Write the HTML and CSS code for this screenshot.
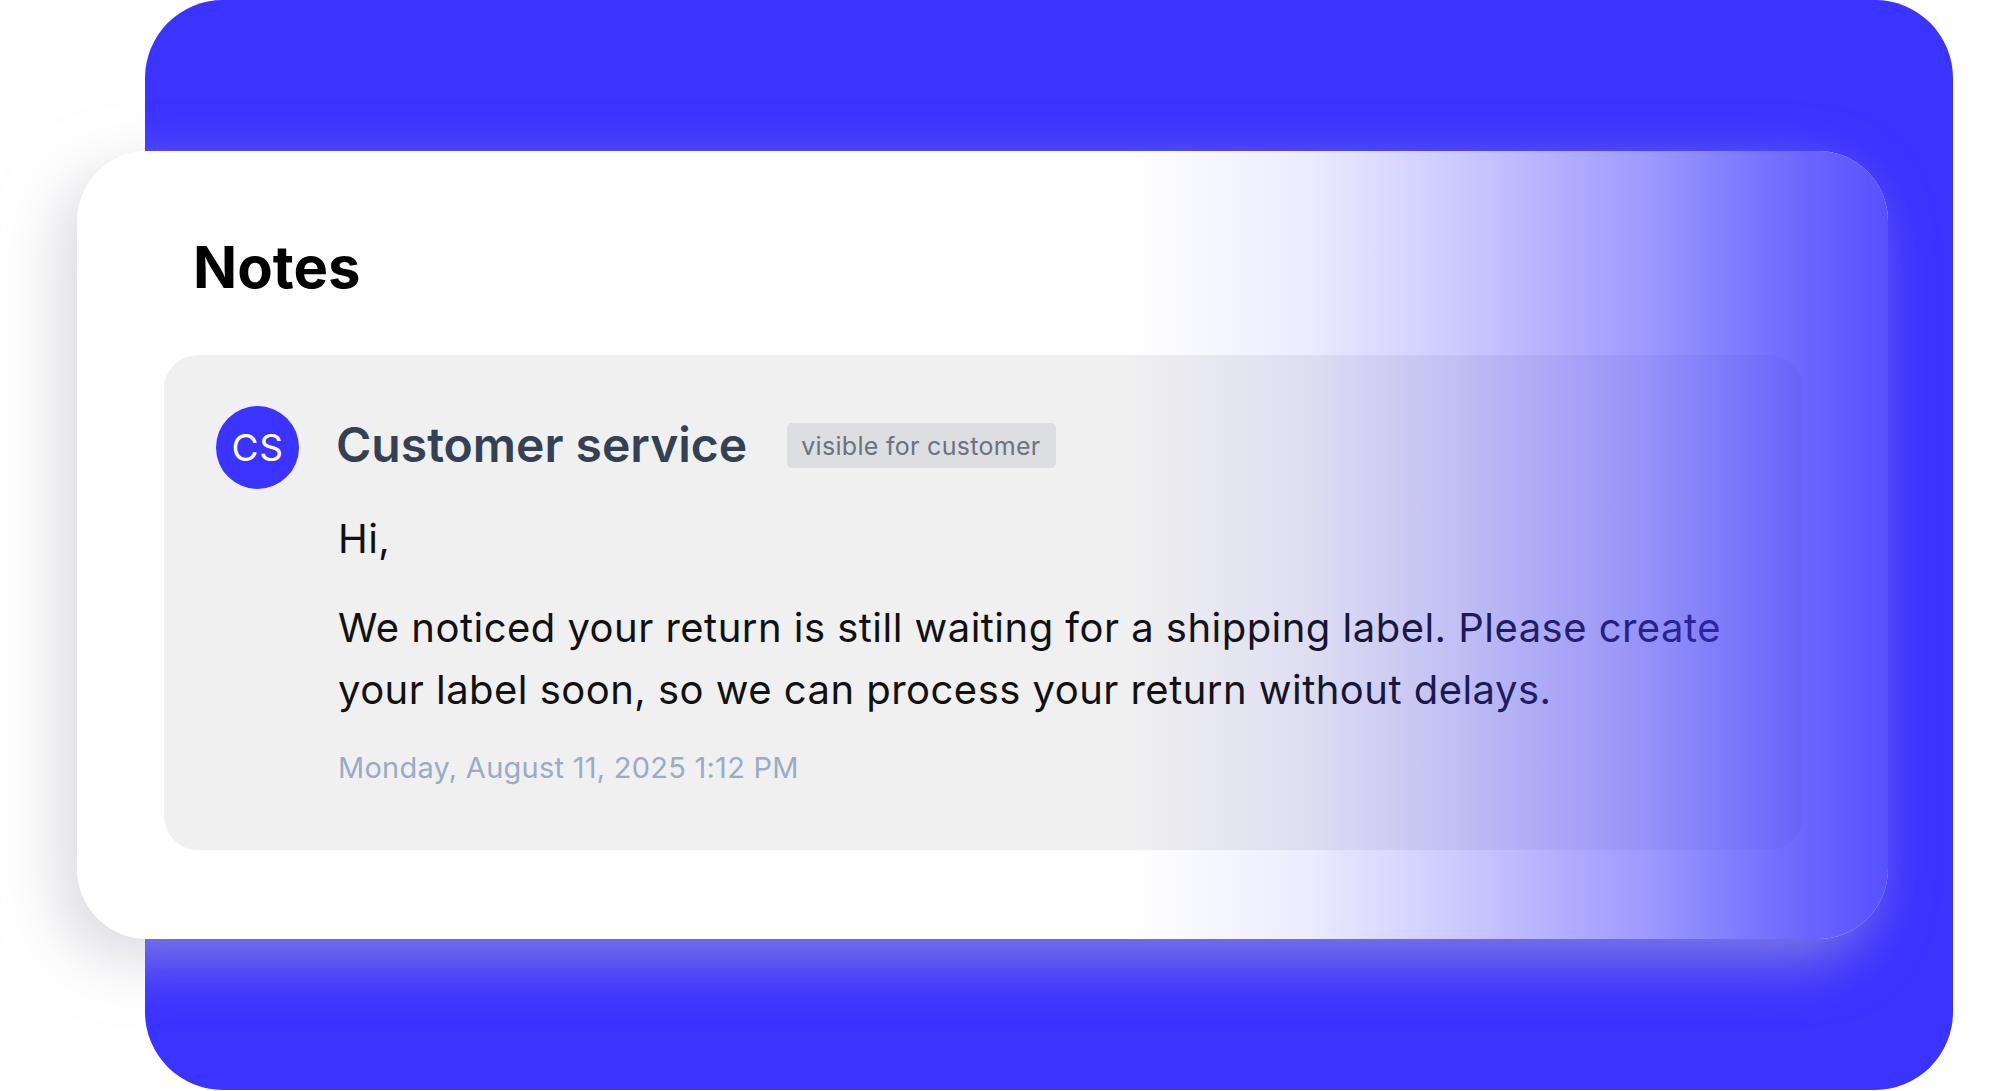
FILE: index.html
```html
<!DOCTYPE html>
<html lang="en">
<head>
<meta charset="utf-8">
<title>Notes</title>
<link rel="stylesheet" href="styles.css">
</head>
<body>
<div class="stage">
  <div class="backdrop"></div>
  <section class="card">
    <h1 class="card-title">Notes</h1>
    <article class="note">
      <div class="avatar">CS</div>
      <div class="note-body">
        <header class="note-head">
          <span class="author">Customer service</span>
          <span class="badge">visible for customer</span>
        </header>
        <p class="note-text">Hi,</p>
        <p class="note-text">We noticed your return is still waiting for a shipping label. Please create your label soon, so we can process your return without delays.</p>
        <time class="note-date">Monday, August 11, 2025 1:12 PM</time>
      </div>
    </article>
  </section>
</div>
</body>
</html>
```

FILE: styles.css
```css
html, body {
  margin: 0;
  padding: 0;
  background: #ffffff;
}

body {
  width: 2011px;
  height: 1091px;
  overflow: hidden;
  font-family: Inter, "Noto Sans", "Liberation Sans", sans-serif;
}

.stage {
  display: grid;
  width: 2011px;
  height: 1091px;
}

.backdrop {
  grid-area: 1 / 1;
  margin-left: 145px;
  width: 1808px;
  height: 1090px;
  border-radius: 78px;
  background: #3b33ff;
}

.card {
  grid-area: 1 / 1;
  align-self: start;
  justify-self: start;
  position: relative;
  box-sizing: border-box;
  margin: 151px 0 0 77px;
  width: 1811px;
  height: 788px;
  padding: 0 85px 0 87px;
  background: #ffffff;
  border-radius: 70px;
  box-shadow: -18px 20px 60px rgba(190, 190, 200, 0.55);
  display: flex;
  flex-direction: column;
}

.card::after {
  content: "";
  position: absolute;
  inset: 0;
  border-radius: inherit;
  pointer-events: none;
  background: linear-gradient(90deg,
    rgba(59, 51, 255, 0) 58%,
    rgba(59, 51, 255, 0.09) 67.5%,
    rgba(59, 51, 255, 0.25) 75.7%,
    rgba(59, 51, 255, 0.5) 86.8%,
    rgba(59, 51, 255, 0.74) 95%,
    rgba(59, 51, 255, 0.86) 100%);
}

.card-title {
  margin: 0;
  height: 204px;
  box-sizing: border-box;
  padding: 81px 0 0 29px;
  font-size: 58px;
  line-height: 70px;
  font-weight: 700;
  color: #000000;
}

.note {
  box-sizing: border-box;
  width: 1639px;
  height: 495px;
  padding: 51px 56px 0 52px;
  background: #f0f0f0;
  border-radius: 34px;
  display: flex;
  gap: 39px;
  align-items: flex-start;
}

.avatar {
  flex: none;
  width: 83px;
  height: 83px;
  border-radius: 50%;
  background: #3b33ff;
  color: #ffffff;
  font-size: 37px;
  font-weight: 400;
  display: flex;
  align-items: center;
  justify-content: center;
  letter-spacing: 0.5px;
}

.note-body {
  flex: 1;
  min-width: 0;
  display: flex;
  flex-direction: column;
}

.note-head {
  height: 83px;
  display: flex;
  align-items: center;
  gap: 40px;
  margin-bottom: 19px;
}

.author {
  font-size: 48px;
  font-weight: 600;
  color: #334155;
  line-height: 58px;
  padding-bottom: 5px;
  margin-left: -2px;
}

.badge {
  box-sizing: border-box;
  height: 45px;
  padding: 0 15px 0 14px;
  display: flex;
  align-items: center;
  background: #dddee2;
  border-radius: 5px;
  font-size: 25px;
  letter-spacing: 0.3px;
  color: #6b7280;
  margin-bottom: 4px;
}

.note-text {
  margin: 0 0 27px 0;
  font-size: 40px;
  line-height: 62px;
  letter-spacing: 0.47px;
  color: #111111;
}

.note-date {
  display: block;
  margin-top: 0;
  font-size: 29px;
  line-height: 40px;
  letter-spacing: 0.25px;
  color: #9aabc6;
}
```
